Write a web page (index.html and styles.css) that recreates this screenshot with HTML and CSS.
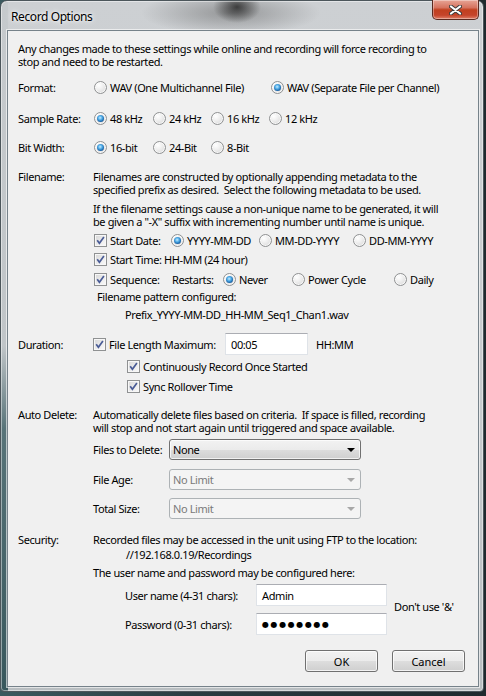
FILE: index.html
```html
<!DOCTYPE html>
<html lang="en">
<head>
    <meta charset="UTF-8">
    <title>Record Options</title>
    <link rel="stylesheet" href="styles.css">
</head>
<body>
<div class="desktop">
    <div class="window">
        <div class="titlebar">
            <span class="title">Record Options</span>
            <button class="close" type="button" aria-label="Close">
                <svg width="13" height="10" viewBox="0 0 13 10">
                    <path d="M2 1.5 L11 8.5 M11 1.5 L2 8.5" stroke="#3b3b3b" stroke-width="4" stroke-linecap="round"/>
                    <path d="M2 1.5 L11 8.5 M11 1.5 L2 8.5" stroke="#fff" stroke-width="2.2" stroke-linecap="round"/>
                </svg>
            </button>
        </div>

        <div class="client">
            <p class="intro">Any changes made to these settings while online and recording will force recording to<br>stop and need to be restarted.</p>

            <div class="row format">
                <span class="lbl">Format:</span>
                <div class="opts fmt">
                    <label class="opt"><span class="radio"></span>WAV (One Multichannel File)</label>
                    <label class="opt"><span class="radio on"></span>WAV (Separate File per Channel)</label>
                </div>
            </div>

            <div class="row sample">
                <span class="lbl">Sample Rate:</span>
                <div class="opts rate">
                    <label class="opt"><span class="radio on"></span>48 kHz</label>
                    <label class="opt"><span class="radio"></span>24 kHz</label>
                    <label class="opt"><span class="radio"></span>16 kHz</label>
                    <label class="opt"><span class="radio"></span>12 kHz</label>
                </div>
            </div>

            <div class="row bits">
                <span class="lbl">Bit Width:</span>
                <div class="opts rate">
                    <label class="opt"><span class="radio on"></span>16-bit</label>
                    <label class="opt"><span class="radio"></span>24-Bit</label>
                    <label class="opt"><span class="radio"></span>8-Bit</label>
                </div>
            </div>

            <!-- filename metadata -->
            <div class="sec filename">
                <span class="lbl">Filename:</span>
                <div class="val">
                    <p>Filenames are constructed by optionally appending metadata to the<br>specified prefix as desired.&nbsp; Select the following metadata to be used.</p>
                    <p class="unique">If the filename settings cause a non-unique name to be generated, it will<br>be given a "-X" suffix with incrementing number until name is unique.</p>
                    <div class="opts date">
                        <label class="opt"><span class="check"><svg width="11" height="11" viewBox="0 0 11 11"><path d="M2.2 5.2 L4.4 8.2 L8.9 2" stroke="#4a5c96" stroke-width="1.7" fill="none"/></svg></span>Start Date:</label>
                        <label class="opt"><span class="radio on"></span>YYYY-MM-DD</label>
                        <label class="opt"><span class="radio"></span>MM-DD-YYYY</label>
                        <label class="opt"><span class="radio"></span>DD-MM-YYYY</label>
                    </div>
                    <label class="opt time"><span class="check"><svg width="11" height="11" viewBox="0 0 11 11"><path d="M2.2 5.2 L4.4 8.2 L8.9 2" stroke="#4a5c96" stroke-width="1.7" fill="none"/></svg></span>Start Time: HH-MM (24 hour)</label>
                    <div class="opts seq">
                        <label class="opt"><span class="check"><svg width="11" height="11" viewBox="0 0 11 11"><path d="M2.2 5.2 L4.4 8.2 L8.9 2" stroke="#4a5c96" stroke-width="1.7" fill="none"/></svg></span>Sequence:</label>
                        <span>Restarts:</span>
                        <label class="opt"><span class="radio on"></span>Never</label>
                        <label class="opt"><span class="radio"></span>Power Cycle</label>
                        <label class="opt"><span class="radio"></span>Daily</label>
                    </div>
                    <p class="pattern">Filename pattern configured:</p>
                    <p class="prefix">Prefix_YYYY-MM-DD_HH-MM_Seq1_Chan1.wav</p>
                </div>
            </div>

            <!-- duration -->
            <div class="row duration">
                <span class="lbl">Duration:</span>
                <label class="opt maxlen"><span class="check"><svg width="11" height="11" viewBox="0 0 11 11"><path d="M2.2 5.2 L4.4 8.2 L8.9 2" stroke="#4a5c96" stroke-width="1.7" fill="none"/></svg></span>File Length Maximum:</label>
                <div class="field short">00:05</div>
                <span class="unit">HH:MM</span>
            </div>
            <label class="opt sub cont"><span class="check"><svg width="11" height="11" viewBox="0 0 11 11"><path d="M2.2 5.2 L4.4 8.2 L8.9 2" stroke="#4a5c96" stroke-width="1.7" fill="none"/></svg></span>Continuously Record Once Started</label>
            <label class="opt sub sync"><span class="check"><svg width="11" height="11" viewBox="0 0 11 11"><path d="M2.2 5.2 L4.4 8.2 L8.9 2" stroke="#4a5c96" stroke-width="1.7" fill="none"/></svg></span>Sync Rollover Time</label>

            <!-- auto delete -->
            <div class="sec autodel">
                <span class="lbl">Auto Delete:</span>
                <div class="val">
                    <p>Automatically delete files based on criteria.&nbsp; If space is filled, recording<br>will stop and not start again until triggered and space available.</p>
                    <div class="combo-row files">
                        <span class="clbl">Files to Delete:</span>
                        <div class="combo">None</div>
                    </div>
                    <div class="combo-row age">
                        <span class="clbl">File Age:</span>
                        <div class="combo off">No Limit</div>
                    </div>
                    <div class="combo-row total">
                        <span class="clbl">Total Size:</span>
                        <div class="combo off">No Limit</div>
                    </div>
                </div>
            </div>

            <!-- ftp access -->
            <div class="sec security">
                <span class="lbl">Security:</span>
                <div class="val">
                    <p>Recorded files may be accessed in the unit using FTP to the location:</p>
                    <p class="ftp">//192.168.0.19/Recordings</p>
                    <p class="hint">The user name and password may be configured here:</p>
                    <div class="creds">
                        <span class="clbl">User name (4-31 chars):</span>
                        <div class="field">Admin</div>
                        <span class="note">Don't use '&amp;'</span>
                        <span class="clbl">Password (0-31 chars):</span>
                        <div class="field dots">●●●●●●●●</div>
                    </div>
                </div>
            </div>

            <div class="buttons">
                <button class="btn" type="button">OK</button>
                <button class="btn" type="button">Cancel</button>
            </div>
        </div>
    </div>
</div>
</body>
</html>
```

FILE: styles.css
```css
* {
    box-sizing: border-box;
}

body {
    margin: 0;
    background: #2c4247;
    font-family: "Noto Sans", "Open Sans", sans-serif;
    font-size: 11px;
    letter-spacing: -0.4px;
    color: #000;
}

p {
    margin: 0;
    white-space: nowrap;
}

.desktop {
    width: 486px;
    height: 696px;
    overflow: hidden;
    background: linear-gradient(to right, #3b5a5f, #2a3b40 40%, #1f2a2e);
}

/* aero frame */
.window {
    width: 484px;
    height: 692px;
    display: flex;
    flex-direction: column;
    padding: 0 4px 4px 6px;
    border: 1px solid #4c565b;
    border-radius: 7px 7px 4px 4px;
    background:
        radial-gradient(ellipse 24px 16px at 236px 6px, rgba(25, 25, 25, 0.75), rgba(60, 60, 60, 0) 100%),
        radial-gradient(ellipse 90px 22px at 230px 12px, rgba(80, 80, 80, 0.45), rgba(80, 80, 80, 0) 100%),
        linear-gradient(to bottom, #c6cacd 0, #c0c5c8 50%, #587479 62%, #38575c 100%) 0 0 / 7px 100% no-repeat,
        linear-gradient(to bottom, #cdd0d3 0, #c6cacd 60%, #b9bec1 100%);
    box-shadow: inset 0 0 0 1px rgba(255, 255, 255, 0.45);
}

.titlebar {
    height: 29px;
    flex: none;
    display: flex;
    align-items: flex-start;
    justify-content: space-between;
}

.title {
    margin: 8px 0 0 4px;
    font-size: 12px;
    line-height: 15px;
    text-shadow: 0 0 6px #fff, 0 0 3px #fff;
}

.close {
    width: 47px;
    height: 20px;
    margin-top: -1px;
    padding: 0;
    display: flex;
    align-items: center;
    justify-content: center;
    border: 1px solid #5b2a20;
    border-top: none;
    border-radius: 0 0 5px 5px;
    background: linear-gradient(to bottom, #e7a596 0, #d6735f 40%, #c1401f 52%, #c5442a 80%, #e08068 100%);
    box-shadow: inset 0 0 0 1px rgba(255, 255, 255, 0.35);
}

.client {
    flex: 1;
    display: flex;
    flex-direction: column;
    padding: 0 13px 0 10px;
    border: 1px solid #76828a;
    background: #f0f0f0;
    line-height: 13px;
    box-shadow: 0 0 0 1px rgba(255, 255, 255, 0.6);
}

.intro {
    margin-top: 11px;
}

.row {
    display: flex;
    align-items: center;
}

.sec {
    display: flex;
}

.lbl {
    width: 75px;
    flex: none;
}

.val {
    display: flex;
    flex-direction: column;
}

.format { margin-top: 13px; }
.sample { margin-top: 18px; }
.bits { margin-top: 16px; }
.filename { margin-top: 16px; }
.duration { margin-top: 12px; height: 22px; }
.cont { margin-top: 5px; }
.sync { margin-top: 7px; }
.autodel { margin-top: 15px; }
.security { margin-top: 14px; }

/* radio and checkbox groups */
.opts {
    display: grid;
    align-items: center;
}

.fmt { grid-template-columns: 177px auto; }
.rate { grid-template-columns: 59px 58px 58px auto; }
.date { grid-template-columns: 77px 88px 94px auto; margin-top: 6px; }
.seq { grid-template-columns: 79px 50px 69px 102px auto; margin-top: 7px; }

.opt {
    display: flex;
    align-items: center;
    gap: 3px;
    white-space: nowrap;
}

.time { margin-top: 6px; }

.radio {
    position: relative;
    width: 13px;
    height: 13px;
    flex: none;
    margin-left: 1px;
    border: 1px solid #8f9192;
    border-radius: 50%;
    background: radial-gradient(circle at 35% 30%, #fff 0, #f1f1f1 35%, #d3d3d3 100%);
    box-shadow: inset 0 0 0 1px rgba(255, 255, 255, 0.7);
}

.radio.on::after {
    content: "";
    position: absolute;
    inset: 2px;
    border-radius: 50%;
    background: radial-gradient(circle at 45% 40%, #c9ecff 0, #52aee8 35%, #1660a6 70%, #10294a 100%);
}

.check {
    width: 13px;
    height: 13px;
    flex: none;
    margin-left: 1px;
    border: 1px solid #8f9192;
    background: linear-gradient(135deg, #d6d6d6 0, #ececec 55%, #fafafa 100%);
    box-shadow: inset 0 0 0 1px #f7f7f7;
}

.check svg {
    display: block;
}

.unique { margin-top: 6px; }
.pattern { margin-top: 4px; padding-left: 4px; }
.prefix { margin-top: 5px; padding-left: 32px; }

.maxlen {
    width: 132px;
}

.maxlen .check {
    margin-left: 0;
}

.field {
    height: 22px;
    padding: 0 5px;
    display: flex;
    align-items: center;
    background: #fff;
    border: 1px solid #dfe3e8;
    border-top-color: #abadb3;
}

.short {
    width: 83px;
}

.unit {
    margin-left: 8px;
}

.sub {
    margin-left: 108px;
}

/* drop-down lists */
.combo-row {
    display: flex;
    align-items: center;
    height: 21px;
}

.files { margin-top: 5px; }
.age { margin-top: 9px; }
.total { margin-top: 8px; }

.clbl {
    width: 76px;
    flex: none;
}

.combo {
    position: relative;
    width: 192px;
    height: 21px;
    padding: 0 3px;
    display: flex;
    align-items: center;
    border: 1px solid #707070;
    border-radius: 3px;
    background: linear-gradient(to bottom, #f2f2f2 0, #ebebeb 50%, #dddddd 51%, #cfcfcf 100%);
    box-shadow: inset 0 0 0 1px rgba(255, 255, 255, 0.7);
}

.combo::after {
    content: "";
    position: absolute;
    right: 5px;
    top: 8px;
    border-left: 4px solid transparent;
    border-right: 4px solid transparent;
    border-top: 4px solid #000;
}

.combo.off {
    color: #7a7a7a;
    border-color: #adb2b5;
    background: #f4f4f4;
    box-shadow: none;
}

.combo.off::after {
    border-top-color: #a8a8a8;
}

.ftp { margin-top: 2px; padding-left: 33px; }
.hint { margin-top: 5px; }

.creds {
    margin: 5px 0 0 32px;
    display: grid;
    grid-template-columns: 131px 131px auto;
    grid-template-rows: 22px 22px;
    row-gap: 7px;
    align-items: center;
}

.creds .clbl {
    width: auto;
}

.note {
    grid-row: 1 / 3;
    grid-column: 3;
    margin: 0 0 6px 7px;
}

.dots {
    font-family: "DejaVu Sans", sans-serif;
    font-size: 8px;
    letter-spacing: 1.6px;
}

.buttons {
    margin-top: 15px;
    display: flex;
    justify-content: flex-end;
    gap: 14px;
}

.btn {
    width: 73px;
    height: 22px;
    padding: 0;
    font: inherit;
    color: #000;
    border: 1px solid #707070;
    border-radius: 3px;
    background: linear-gradient(to bottom, #f2f2f2 0, #ebebeb 50%, #dddddd 51%, #cfcfcf 100%);
    box-shadow: inset 0 0 0 1px rgba(255, 255, 255, 0.75);
}
```
